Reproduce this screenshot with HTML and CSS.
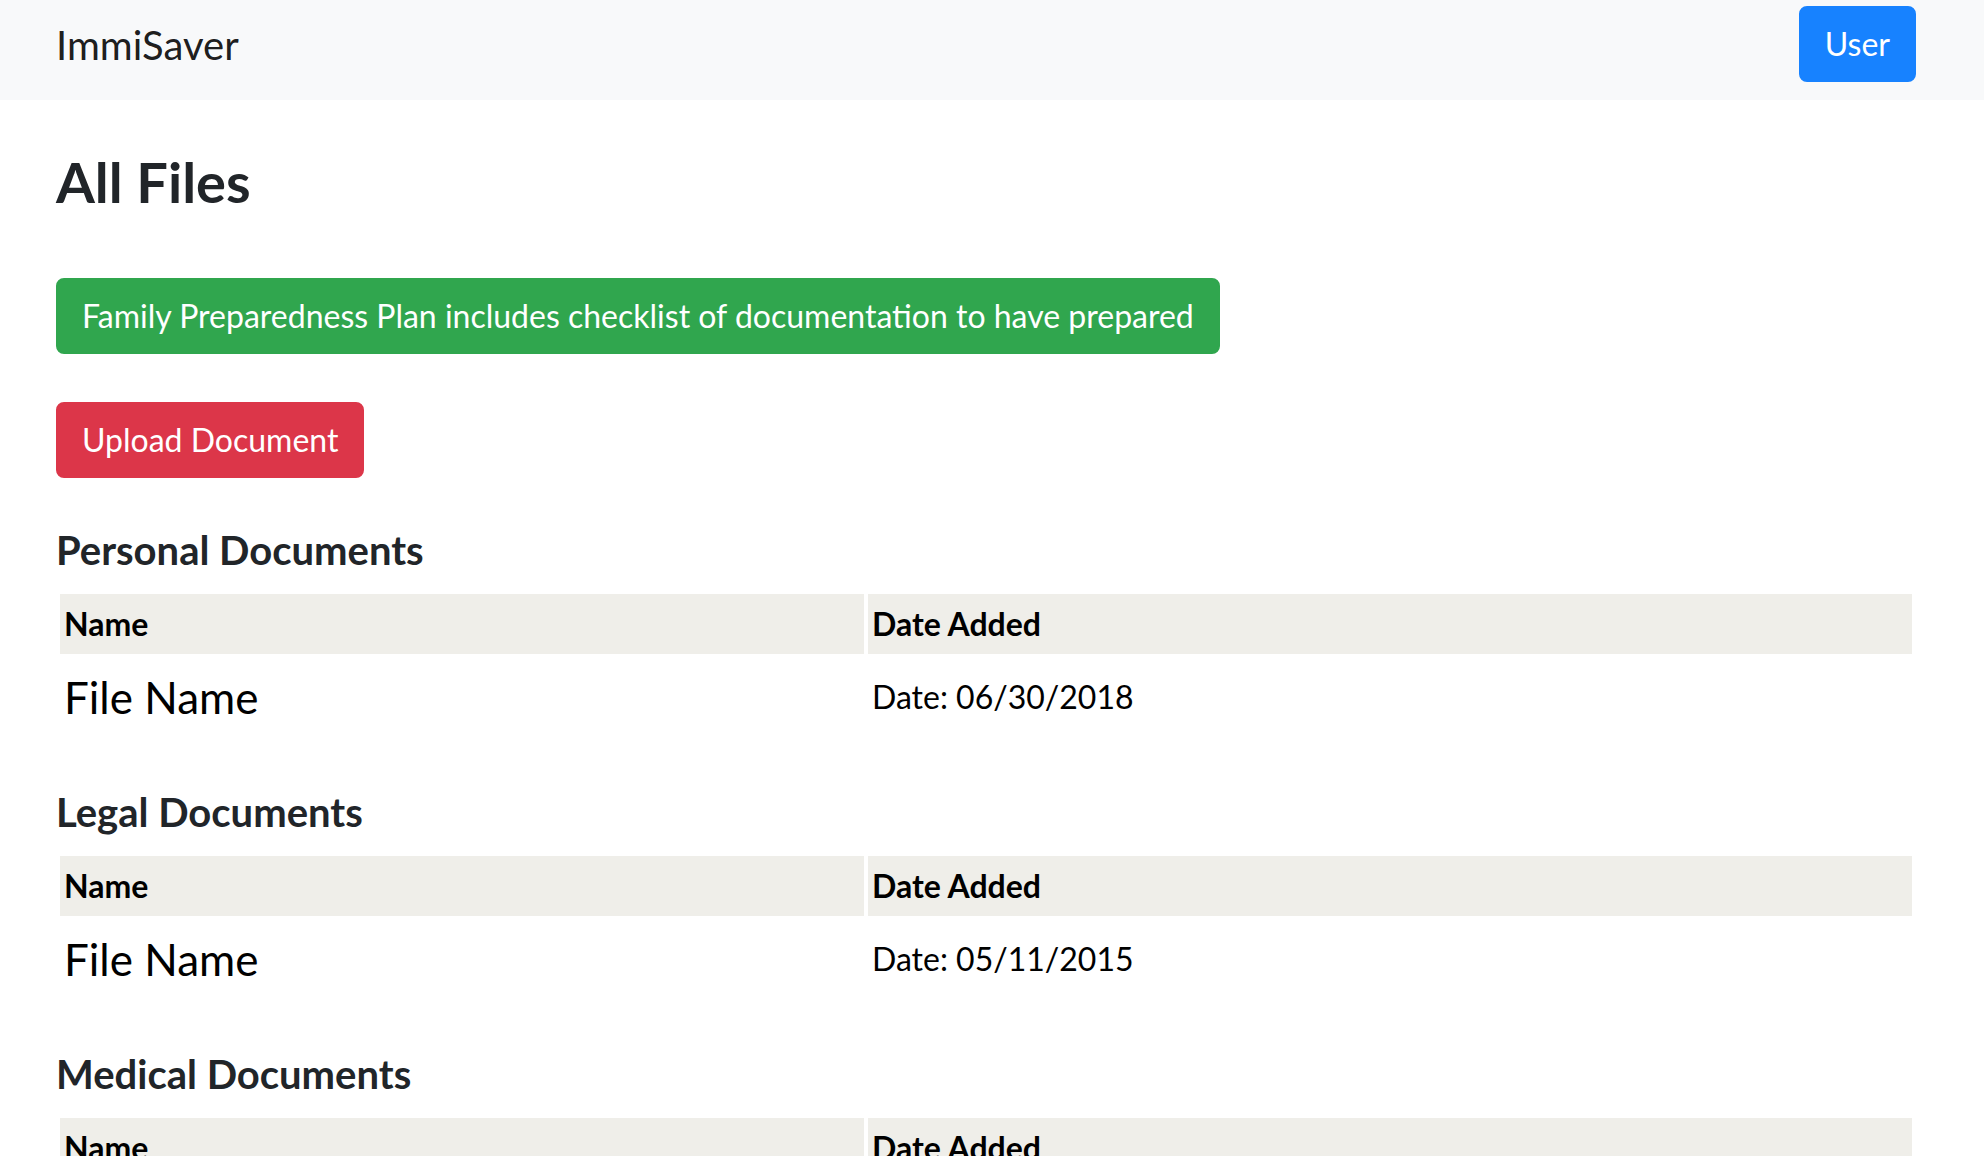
FILE: index.html
```html
<!DOCTYPE html>
<html lang="en">
<head>
<meta charset="utf-8">
<title>ImmiSaver - All Files</title>
<link rel="stylesheet" href="styles.css">
</head>
<body>
<nav class="navbar">
  <a class="brand" href="#">ImmiSaver</a>
  <button class="btn btn-primary" type="button">User</button>
</nav>
<main class="main">
  <h1 class="page-title">All Files</h1>
  <div class="action-row">
    <button class="btn btn-success" type="button">Family Preparedness Plan includes checklist of documentation to have prepared</button>
  </div>
  <div class="action-row">
    <button class="btn btn-danger" type="button">Upload Document</button>
  </div>

  <section class="doc-section">
    <h2 class="section-title">Personal Documents</h2>
    <table class="doc-table">
      <colgroup><col class="col-name"><col class="col-date"></colgroup>
      <thead><tr><th>Name</th><th>Date Added</th></tr></thead>
      <tbody><tr><td class="fname">File Name</td><td class="fdate">Date: 06/30/2018</td></tr></tbody>
    </table>
  </section>

  <section class="doc-section">
    <h2 class="section-title">Legal Documents</h2>
    <table class="doc-table">
      <colgroup><col class="col-name"><col class="col-date"></colgroup>
      <thead><tr><th>Name</th><th>Date Added</th></tr></thead>
      <tbody><tr><td class="fname">File Name</td><td class="fdate">Date: 05/11/2015</td></tr></tbody>
    </table>
  </section>

  <section class="doc-section">
    <h2 class="section-title">Medical Documents</h2>
    <table class="doc-table">
      <colgroup><col class="col-name"><col class="col-date"></colgroup>
      <thead><tr><th>Name</th><th>Date Added</th></tr></thead>
      <tbody><tr><td class="fname">File Name</td><td class="fdate">Date: 01/22/2017</td></tr></tbody>
    </table>
  </section>
</main>
</body>
</html>
```
FILE: styles.css
```css
html {
  scrollbar-width: none;
}
html::-webkit-scrollbar {
  display: none;
}
body {
  margin: 0;
  font-family: Lato, "Open Sans", "Liberation Sans", sans-serif;
  color: #212529;
  background: #ffffff;
}

.navbar {
  display: flex;
  justify-content: space-between;
  align-items: flex-start;
  box-sizing: border-box;
  height: 100px;
  padding: 6px 68px 0 56px;
  background: #f8f9fa;
}
.brand {
  margin-top: 9px;
  font-size: 40px;
  line-height: 60px;
  color: rgba(0, 0, 0, 0.9);
  text-decoration: none;
}

.btn {
  display: inline-block;
  font-family: inherit;
  font-size: 32px;
  font-weight: 400;
  line-height: 48px;
  padding: 12px 24px;
  border: 2px solid transparent;
  border-radius: 8px;
  color: #ffffff;
  cursor: pointer;
}
.btn-primary {
  background: #1782ff;
  border-color: #1782ff;
}
.btn-success {
  background: #30a64e;
  border-color: #30a64e;
}
.btn-danger {
  background: #dc3649;
  border-color: #dc3649;
}

.main {
  padding: 0 68px 0 56px;
}
.page-title {
  margin: 48px 0 63px;
  font-size: 56px;
  line-height: 67px;
  font-weight: 700;
}
.action-row {
  margin-bottom: 48px;
}

.section-title {
  margin: 0 0 16px;
  font-size: 40px;
  line-height: 48px;
  font-weight: 700;
  color: #212529;
}
.doc-table {
  width: 100%;
  table-layout: fixed;
  border-collapse: separate;
  border-spacing: 4px;
  margin-bottom: 48px;
  color: #000000;
}
.col-name {
  width: 804px;
}
.doc-table th {
  background: #efeee9;
  text-align: left;
  font-size: 32px;
  line-height: 48px;
  font-weight: 700;
  padding: 6px 4px;
}
.doc-table td {
  padding: 6px 4px;
  vertical-align: middle;
}
.fname {
  font-size: 44px;
  line-height: 66px;
}
.fdate {
  font-size: 32px;
  line-height: 48px;
}
```
